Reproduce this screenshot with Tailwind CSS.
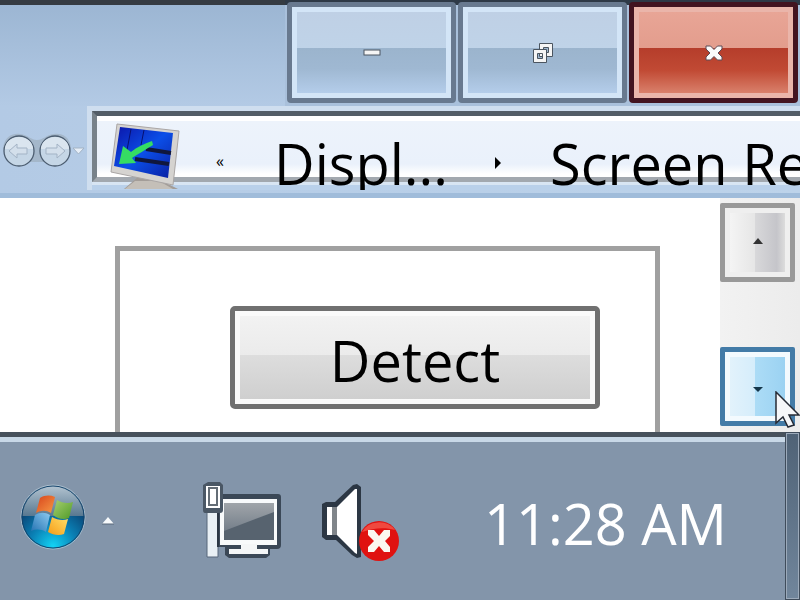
<!DOCTYPE html>
<html lang="en" class="h-full">
<head>
  <meta charset="UTF-8" />
  <meta name="viewport" content="width=device-width, initial-scale=1.0" />
  <title>Screen Resolution</title>
  <script src="https://cdn.jsdelivr.net/npm/@tailwindcss/browser@4"></script>
</head>
<body class="flex h-screen flex-col overflow-hidden bg-white font-['Open_Sans','Noto_Sans',sans-serif] text-black">
  <!-- Window frame -->
  <header class="border-b-5 border-[#a0bcda] bg-linear-to-r from-[#b3cae5] to-[#bdd3ea]">
    <div class="flex h-[106px] items-start justify-end gap-[2px] bg-linear-to-b from-[#2e3946] from-5% to-[#a9c0db] to-5% pr-[2px] pt-[2px]">
      <div class="-mt-[2px] h-[106px] flex-1 border-t-5 border-[#353b42] bg-linear-to-b from-[#9cb6d3] to-[#b3cae5]"></div>
      <button type="button" aria-label="Minimize" class="flex h-[101px] w-[169px] items-center justify-center rounded-[4px] border-5 border-[#68798f]">
        <span class="flex h-full w-full items-center justify-center border-5 border-[#d3e5f7] bg-[linear-gradient(#bfd0e5_0,#bfd3e8_44%,#9bb4cd_44%,#9fb8d2_70%,#b4cdea_100%)]">
          <svg width="18" height="8" viewBox="0 0 18 8"><rect x="1" y="1" width="16" height="5" fill="#f5f5f5" stroke="#4b5560" /></svg>
        </span>
      </button>
      <button type="button" aria-label="Restore" class="flex h-[101px] w-[169px] items-center justify-center rounded-[4px] border-5 border-[#68798f]">
        <span class="flex h-full w-full items-center justify-center border-5 border-[#d3e5f7] bg-[linear-gradient(#bfd0e5_0,#bfd3e8_44%,#9bb4cd_44%,#9fb8d2_70%,#b4cdea_100%)]">
          <svg width="22" height="22" viewBox="0 0 22 22" fill-rule="evenodd" fill="#f5f5f5" stroke="#4b5560">
            <path d="M7.500 1.500h13v13h-13zM11.500 5.500v5h5v-5z" />
            <path d="M1.500 7.500h13v13h-13zM5.500 11.500v5h5v-5z" />
          </svg>
        </span>
      </button>
      <button type="button" aria-label="Close" class="flex h-[101px] w-[169px] items-center justify-center rounded-[4px] border-5 border-[#431420]">
        <span class="flex h-full w-full items-center justify-center border-5 border-[#eab5aa] bg-[linear-gradient(#e8a596_0,#e39d8d_44%,#b53d2b_44%,#c14a34_72%,#d9806b_100%)]">
          <svg width="18" height="16" viewBox="0 0 18 16"><path d="M1 1h4.500l3.500 3.500L12.500 1H17v3l-4 4 4 4v3h-4.500L9 11.500 5.500 15H1v-3l4-4-4-4z" fill="#fafafa" stroke="#5c4a55" stroke-linejoin="round" /></svg>
        </span>
      </button>
    </div>

    <!-- Navigation -->
    <div class="flex h-[87px] items-start">
      <div class="flex w-[87px] shrink-0 pt-[26px]">
        <svg width="87" height="36" viewBox="0 0 87 36">
          <path d="M3 16C5 3 14 1 20 2 28 3 31 8 37 8 43 8 46 3 54 2 62 1 70 5 71 16L66 30H8z" fill="#a4b7ca" />
          <g stroke="#4c5d70" stroke-width="1.300">
            <circle cx="19" cy="19" r="15" fill="#c5d6e6" />
            <circle cx="55" cy="19" r="15" fill="#c5d6e6" />
          </g>
          <path d="M5 17a14 12 0 0 1 28 0M41 17a14 12 0 0 1 28 0" fill="#dae5ef" />
          <g fill="#d3dfeb" stroke="#a3b3c5">
            <path d="M9 19l8-7v4h10v6H17v4z" />
            <path d="M65 19l-8-7v4H46v6h11v4z" />
            <path d="M73 16h11l-5.500 6z" fill="#e6eef7" />
          </g>
        </svg>
      </div>
      <nav aria-label="Address" class="min-w-0 flex-1 overflow-hidden border-l-5 border-t-5 border-[#cfdeef]">
        <div class="h-[79px] bg-linear-to-b from-[#d8e5f3] from-94% to-[#b9d0ea] to-94%">
          <div class="flex h-[71px] items-center whitespace-nowrap border-y-5 border-l-5 border-b-[#a2a8af] border-l-[#78828a] border-t-[#535d67] bg-[linear-gradient(#fff_0,#fff_5px,#edf3fb_5px,#eaf1fb_48px,#fff_58px)] pl-[13px] pt-8">
            <svg class="mb-3 shrink-0" width="72" height="68" viewBox="0 0 72 68">
              <defs>
                <linearGradient id="screen" x1="0" y1="0" x2="1" y2="1">
                  <stop offset="0" stop-color="#0b14a8" />
                  <stop offset=".5" stop-color="#0b4fe8" />
                  <stop offset="1" stop-color="#0a1ea0" />
                </linearGradient>
              </defs>
              <path d="M28 54L14 66H68L54 59z" fill="#a39d98" />
              <path d="M25 58l-10 8h48l-14-8z" fill="#c4bfb8" />
              <path d="M7 1L69 8 63 62 1 49z" fill="#d5d3d0" stroke="#aaa6a5" />
              <path d="M10 4L63 10 58 55 4 43z" fill="url(#screen)" />
              <path d="M21 6l-4 21M34 7l-3 15" stroke="#071070" />
              <path d="M36 26l25 4M25 36l34 5" stroke="#10173d" stroke-width="4" />
              <path d="M42 18c-8 3-15 6-21 11l-8-6-4 18 17-1-4-5c6-4 13-8 21-13z" fill="#35dc63" />
            </svg>
            <button type="button" aria-label="Previous locations" class="mb-1 ml-[34px] w-3 shrink-0 text-left text-base font-medium leading-4">«</button>
            <a href="#" class="ml-[46px] w-[220px] shrink-0 text-[56px] leading-none">Displ...</a>
            <svg class="shrink-0" width="8" height="14" viewBox="0 0 8 14"><path d="M1 1l6 6-6 6z" /></svg>
            <a href="#" class="ml-12 shrink-0 text-[56px] leading-none">Screen Resolution</a>
          </div>
        </div>
      </nav>
    </div>
  </header>

  <!-- Page content -->
  <main class="flex min-h-0 flex-1">
    <section class="ml-[115px] mr-[60px] mt-12 flex-1 border-x-5 border-t-5 border-[#a0a0a0] pl-[110px] pr-[55px] pt-[55px]">
      <button type="button" class="h-[103px] w-full rounded-[5px] border-5 border-[#707070]">
        <span class="flex h-full items-center justify-center border-5 border-[#fafafa] bg-[linear-gradient(#f2f2f2_0,#ebebeb_47%,#dddddd_47%,#cfcfcf_100%)] pt-1 text-[56px] leading-none">Detect</span>
      </button>
    </section>
    <div class="flex w-20 flex-col justify-between bg-linear-to-r from-[#f2f2f2] to-[#ececec] pb-[6px] pr-[5px] pt-[5px]">
      <button type="button" aria-label="Scroll up" class="h-[79px] rounded-[2px] border-5 border-[#999999]">
        <span class="flex h-full items-center justify-center border-5 border-[#efefef] bg-[linear-gradient(to_right,#f4f4f4_0,#e6e6e6_45%,#d8d8da_46%,#c5c5ca_85%,#dcdcdc_100%)] pb-1">
          <svg width="12" height="8" viewBox="0 0 12 8"><path d="M6 1l5 6H1z" fill="#333" /></svg>
        </span>
      </button>
      <button type="button" aria-label="Scroll down" class="h-[79px] rounded-[2px] border-5 border-[#437ba7]">
        <span class="flex h-full items-center justify-center border-5 border-[#f3fafe] bg-[linear-gradient(to_right,#e2f2fb_0,#d5edfb_46%,#acdcf6_46%,#9bd2f2_100%)] pt-1">
          <svg width="12" height="8" viewBox="0 0 12 8"><path d="M1 2h10L6 7z" fill="#15364a" /></svg>
        </span>
      </button>
    </div>
  </main>

  <!-- Taskbar -->
  <footer class="flex h-[168px] shrink-0 bg-[#8395aa]">
    <div class="flex flex-1 items-center border-t-5 border-[#47515c] pb-1 shadow-[inset_0_5px_0_#c8d8e7]">
      <button type="button" aria-label="Start" class="ml-5 shrink-0">
        <svg width="66" height="66" viewBox="0 0 66 66">
          <defs>
            <radialGradient id="orb" cx=".5" cy=".96" r=".72">
              <stop offset="0" stop-color="#13d4f5" />
              <stop offset=".5" stop-color="#0a80b5" />
              <stop offset="1" stop-color="#0a4070" />
            </radialGradient>
            <linearGradient id="gloss" x1="0" y1="0" x2="0" y2="1">
              <stop offset="0" stop-color="#b5c5d2" />
              <stop offset="1" stop-color="#587890" />
            </linearGradient>
            <linearGradient id="red" x1="0" y1="0" x2="1" y2="1">
              <stop offset="0" stop-color="#d8441c" />
              <stop offset="1" stop-color="#f79a45" />
            </linearGradient>
            <linearGradient id="green" x1="0" y1="0" x2="1" y2="1">
              <stop offset="0" stop-color="#a8d070" />
              <stop offset="1" stop-color="#4f9a28" />
            </linearGradient>
            <linearGradient id="blue" x1="1" y1="0" x2="0" y2="1">
              <stop offset="0" stop-color="#8cc9ef" />
              <stop offset="1" stop-color="#2372b2" />
            </linearGradient>
            <linearGradient id="yellow" x1="0" y1="1" x2="1" y2="0">
              <stop offset="0" stop-color="#f79b16" />
              <stop offset="1" stop-color="#ffe06a" />
            </linearGradient>
          </defs>
          <circle cx="33" cy="33" r="32" fill="url(#orb)" stroke="#a9bccb" />
          <path d="M2 32a31 31 0 0 1 62 0z" fill="url(#gloss)" />
          <circle cx="33" cy="33" r="31" fill="none" stroke="#14446c" />
          <path d="M20 14c5-3 10-3 15-1l-4 16c-5-3-10-3-15 0z" fill="url(#red)" />
          <path d="M37 16c5 3 11 4 16 2l-4 16c-5 2-11 1-16-3z" fill="url(#green)" />
          <path d="M15 31c5-3 10-3 15 0l-4 17c-5-3-10-3-15-1z" fill="url(#blue)" />
          <path d="M32 33c5 3 11 4 16 2l-4 15c-5 2-11 1-16-2z" fill="url(#yellow)" />
        </svg>
      </button>
      <button type="button" aria-label="Show hidden icons" class="ml-4 mt-2 shrink-0">
        <svg width="12" height="8" viewBox="0 0 12 8"><path d="M6 0l6 7H0z" fill="#f7fafc" /><path d="M0 7h12" stroke="#59687a" /></svg>
      </button>
      <button type="button" aria-label="Network" class="ml-[88px] shrink-0">
        <svg class="mt-2" width="80" height="78" viewBox="0 0 80 78">
          <defs>
            <linearGradient id="glass" x1="0" y1="0" x2="0" y2="1">
              <stop offset="0" stop-color="#a0a5aa" />
              <stop offset="1" stop-color="#66727f" />
            </linearGradient>
          </defs>
          <path d="M16 12h60q3 0 3 3v48q0 4-4 4h-7v6l-4 3H27l-4-3v-8h-7z" fill="#3b4857" />
          <path d="M18 17h57v46H18z" fill="#f8fafb" />
          <path d="M22 21h50v37H22z" fill="url(#glass)" />
          <path d="M22 49l50-19v28H22z" fill="#57636f" />
          <path d="M39 62h16v5h11v5H27v-5h12z" fill="#f4f6f7" />
          <path d="M5 29h11v46H5z" fill="#e9f0f5" stroke="#56677a" />
          <path d="M16 31v34" stroke="#2c3744" stroke-width="2" />
          <path d="M6 0h12l3 3v25q0 3-3 3H3q-2 0-2-3V3z" fill="#4a5765" />
          <path d="M4 4h14v22H4z" fill="#fff" />
          <path d="M7 6h8v17H7z" fill="none" stroke="#646d76" stroke-width="2" />
        </svg>
      </button>
      <button type="button" aria-label="Volume muted" class="ml-10 shrink-0">
        <svg class="mt-3" width="78" height="78" viewBox="0 0 78 78">
          <path d="M0 20l4-2h9L31 1l4-1 4 3v70l-4 1-5-3-16-15H4l-4-3z" fill="#2c3744" />
          <path d="M5 23h8v28H5z" fill="#fff" />
          <path d="M10 23h5v28h-5z" fill="#80858a" />
          <path d="M15 23L33 5h2v65l-2-1-18-18z" fill="#fff" />
          <circle cx="57" cy="57" r="20" fill="#e01210" />
          <path d="M40 48a19 17 0 0 1 33-2c-10-3-22-2-33 2z" fill="#f0493f" />
          <path d="M46 46h6l5 6 5-6h6v6l-5 5 5 6v5h-6l-5-6-5 6h-6v-5l6-6-6-6z" fill="#fbf8f0" />
        </svg>
      </button>
      <time datetime="11:28" class="ml-auto mr-[58px] mt-3 shrink-0 text-[56px] leading-none text-white">11:28 AM</time>
    </div>
    <button type="button" aria-label="Show desktop" class="w-[15px] shrink-0 border border-[#3f4c5b] bg-linear-to-b from-[#4f6276] to-[#71869c] shadow-[inset_0_0_0_1px_#9caaba]"></button>
  </footer>

  <!-- Mouse pointer -->
  <svg class="pointer-events-none absolute left-[775px] top-[391px]" width="25" height="38" viewBox="0 0 25 38">
    <path d="M1 1v31l7-6 5 10 6-2-5-10h10z" fill="#f6f7f9" stroke="#272b35" stroke-width="1.500" />
  </svg>
</body>
</html>
